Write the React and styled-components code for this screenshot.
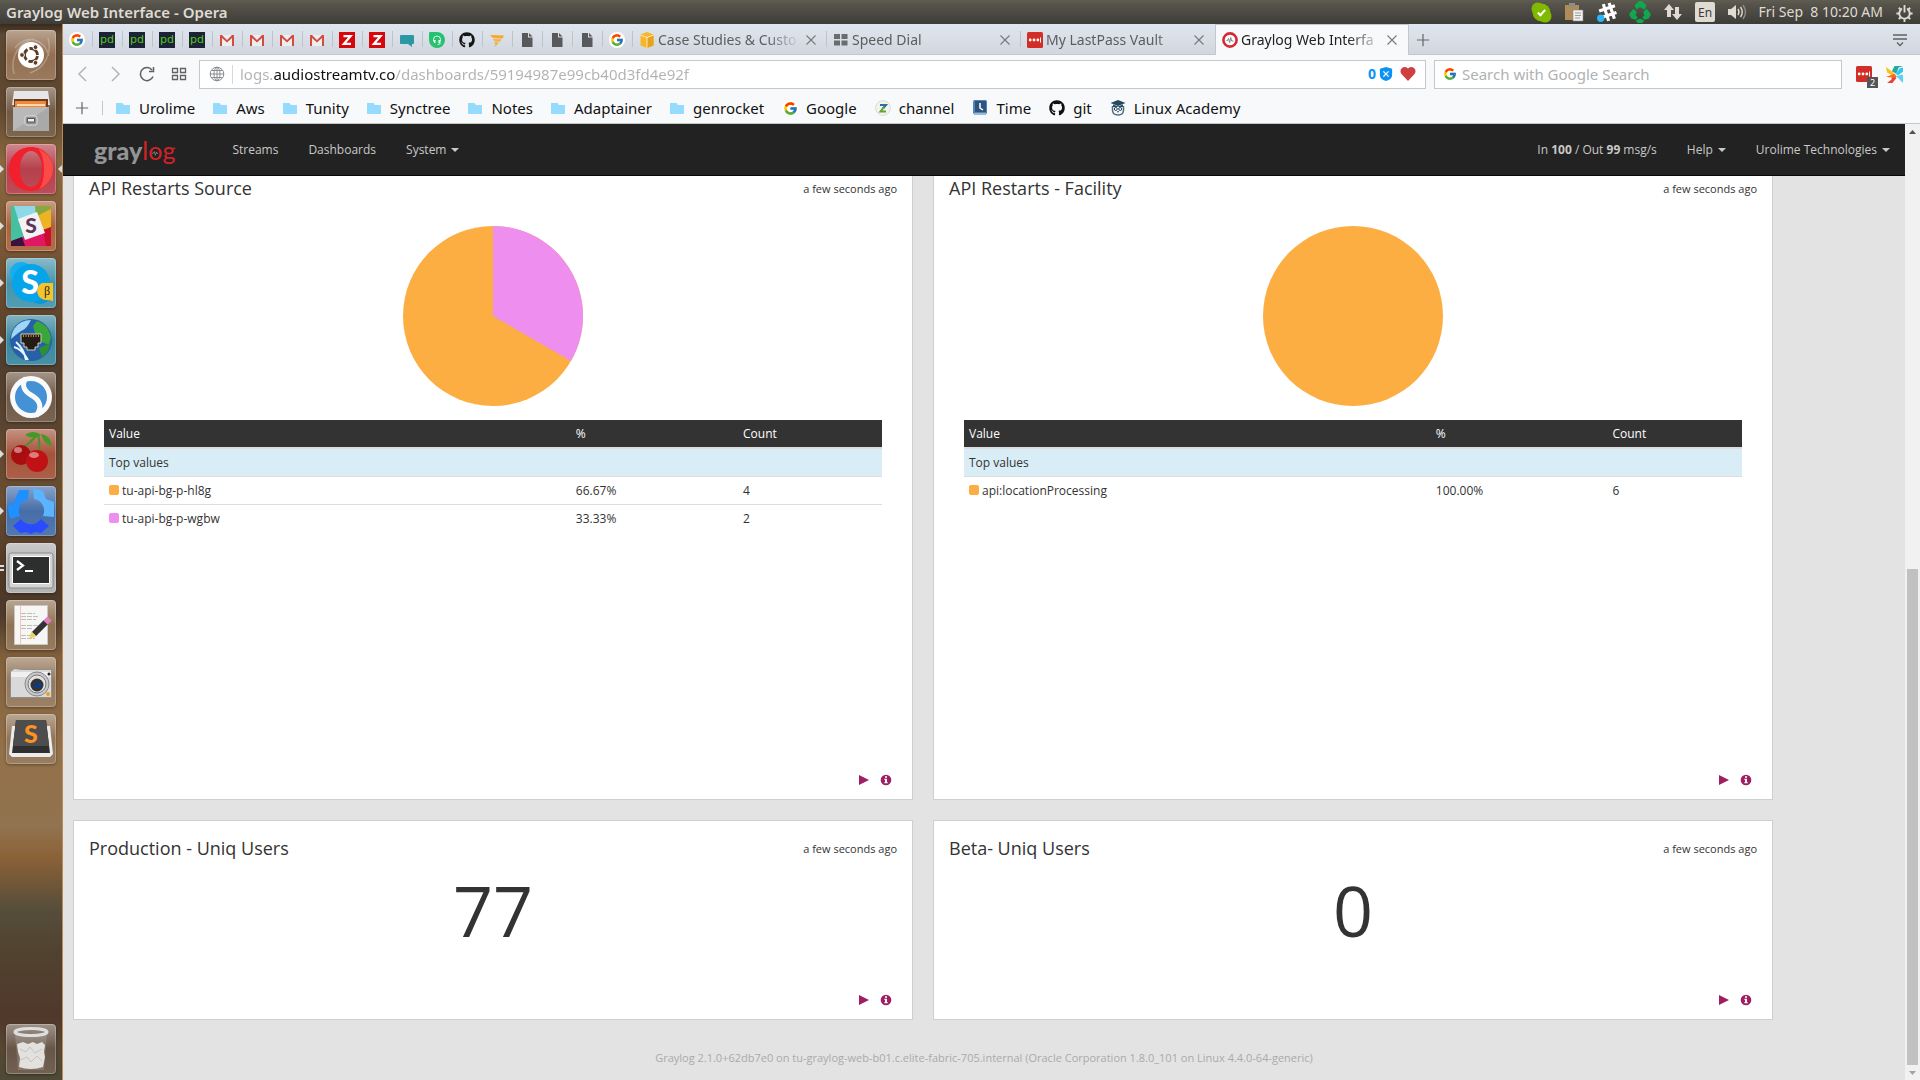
import React from "react";
import styled, { createGlobalStyle, css } from "styled-components";
import { FcGoogle } from "react-icons/fc";
import { FaGithub } from "react-icons/fa";

const uiFont = '"Noto Sans", "Open Sans", sans-serif';
const pageFont = '"Open Sans", "Noto Sans", sans-serif';

const Global = createGlobalStyle`
  *, *::before, *::after { box-sizing: border-box; }
  body { margin: 0; background: #e3e3e3; color: #333; font: 12px/17px ${pageFont}; }
  button { margin: 0; padding: 0; border: 0; background: none; font: inherit; color: inherit; cursor: pointer; }
  a { color: inherit; text-decoration: none; }
  svg { display: block; flex: none; }
`;

/* ---------- desktop frame ---------- */
const Desktop = styled.div`
  display: flex;
  flex-direction: column;
  height: 100vh;
  overflow: hidden;
`;
const SystemBar = styled.header`
  display: flex;
  align-items: center;
  justify-content: space-between;
  flex: none;
  height: 24px;
  padding: 0 6px;
  background: linear-gradient(#5f5c51, #56534b 20%, #3d3c37);
  color: #dfdbd2;
  font: 14px/20px ${uiFont};
`;
const WindowTitle = styled.strong`
  font-size: 15px;
  font-weight: 600;
`;
const Tray = styled.div`
  display: flex;
  align-items: center;
  gap: 12px;
`;
const Clock = styled.time`
  white-space: pre;
`;
const Workspace = styled.div`
  display: flex;
  flex: 1;
  min-height: 0;
`;
const Launcher = styled.nav`
  display: flex;
  flex-direction: column;
  gap: 7px;
  flex: none;
  width: 63px;
  padding: 6px 0 6px;
  border-right: 1px solid #b98a58;
  background: linear-gradient(
    #3a2a1d 0, #5d4833 1%, #60482f 8%, #8a6840 13%, #7d5a38 20%, #67482e 26%,
    #4f3d2e 32%, #6a4e32 45%, #4f3826 52%, #4d3b2c 56%, #81603c 60%, #93714a 69%,
    #91734f 76%, #8a6137 79%, #554d3a 84%, #51422f 88%, #50382b 94%, #564732 97%, #4d4a36);
`;
const Tile = styled.button`
  position: relative;
  flex: none;
  width: 50px;
  height: 50px;
  margin-left: 6px;
  border-radius: 4px;
  background: linear-gradient(rgba(255, 255, 255, 0.4), rgba(255, 255, 255, 0.05) 50%, rgba(255, 255, 255, 0.12)), ${(p) => p.$tint};
  box-shadow: inset 0 0 0 1px rgba(255, 255, 255, 0.25), 0 1px 3px rgba(0, 0, 0, 0.35);
  ${(p) => p.$last && css`margin-top: auto;`}
  ${(p) => p.$open && css`
    &::before {
      content: "";
      position: absolute;
      left: -6px;
      top: 21px;
      border: 4px solid transparent;
      border-left-color: #dcdcdc;
      border-right: 0;
    }
  `}
  ${(p) => p.$windows && css`
    &::before {
      content: "";
      position: absolute;
      left: -6px;
      top: 22px;
      width: 4px;
      height: 6px;
      border: solid #dcdcdc;
      border-width: 2px 0;
    }
  `}
  ${(p) => p.$active && css`
    &::after {
      content: "";
      position: absolute;
      right: -6px;
      top: 21px;
      border: 4px solid transparent;
      border-right-color: #dcdcdc;
      border-left: 0;
    }
  `}
`;

/* ---------- browser chrome ---------- */
const Browser = styled.div`
  display: flex;
  flex-direction: column;
  flex: 1;
  min-width: 0;
  background: #f8f9fb;
  font: 15px/20px ${uiFont};
`;
const TabBar = styled.div`
  display: flex;
  flex: none;
  height: 31px;
  background: linear-gradient(#e0e6ef, #d1d6de);
  box-shadow: inset 0 -1px 0 #c4c8c9;
  color: #5c5d60;
  font-size: 14px;
`;
const divider = css`
  &::after {
    content: "";
    position: absolute;
    right: 0;
    top: 7px;
    height: 16px;
    border-right: 1px solid #bfc3c9;
  }
`;
const PinnedTab = styled.button`
  position: relative;
  display: grid;
  place-items: center;
  width: 30px;
  padding-right: 2px;
  flex: none;
  ${divider}
`;
const TabItem = styled.div`
  position: relative;
  display: flex;
  align-items: center;
  gap: 3px;
  flex: 0 1 194px;
  min-width: 0;
  padding: 0 9px 0 6px;
  ${(p) => p.$active
    ? css`
        background: #f8f9fb;
        color: #222;
        border: solid #c4c8c9;
        border-width: 1px 1px 0;
      `
    : p.$divided && divider}
`;
const TabLabel = styled.button`
  flex: 1;
  min-width: 0;
  overflow: hidden;
  text-align: left;
  white-space: nowrap;
  mask-image: linear-gradient(90deg, #000 calc(100% - 34px), transparent);
`;
const IconButton = styled.button`
  display: grid;
  place-items: center;
  flex: none;
  width: ${(p) => p.$w || 32}px;
  color: #5f6163;
`;
const Push = styled.span`
  margin-left: auto;
  display: flex;
`;
const NavRow = styled.div`
  display: flex;
  align-items: center;
  flex: none;
  height: 38px;
  padding: 0 17px 0 4px;
`;
const Field = styled.label`
  display: flex;
  align-items: center;
  height: 29px;
  background: #fff;
  border: 1px solid #c4c8c9;
  ${(p) => (p.$search ? css`flex: 0 1 408px; margin: 0 14px 0 8px; padding-left: 8px; gap: 5px;` : css`flex: 1; margin-left: 4px; padding: 0 9px 0 9px; gap: 7px;`)}
`;
const FieldInput = styled.input`
  flex: 1;
  min-width: 0;
  border: 0;
  padding: 0;
  outline: 0;
  background: none;
  color: #b5b5b5;
  font: 15px/22px ${uiFont};
  &::placeholder { color: #b0b2b3; opacity: 1; }
`;
const UrlInput = styled(FieldInput)`
  background: linear-gradient(90deg, #b0b2b3 34px, #111 34px, #111 155px, #b0b2b3 155px);
  background-clip: text;
  -webkit-text-fill-color: transparent;
`;
const FieldRule = styled.span`
  height: 19px;
  border-left: 1px solid #d6d8da;
`;
const Blocked = styled.button`
  display: flex;
  align-items: center;
  gap: 3px;
  color: #0a93f5;
  font-size: 14px;
  font-weight: 700;
`;
const Extensions = styled.div`
  display: flex;
  align-items: center;
  gap: 14px;
`;
const ExtButton = styled.button`
  position: relative;
`;
const ExtBadge = styled.span`
  position: absolute;
  right: -6px;
  bottom: -6px;
  width: 11px;
  height: 11px;
  background: #555;
  color: #fff;
  font: 9px/11px ${uiFont};
  text-align: center;
`;
const Bookmarks = styled.nav`
  display: flex;
  align-items: center;
  gap: 18px;
  flex: none;
  height: 31px;
  padding: 0 12px;
  border-bottom: 1px solid #c4c8c9;
  color: #111;
`;
const AddBookmark = styled.button`
  padding-right: 13px;
  margin-right: -5px;
  border-right: 1px solid #c4c8c9;
  color: #5f6163;
`;
const Bookmark = styled.a`
  display: flex;
  align-items: center;
  gap: 8px;
  white-space: nowrap;
`;

/* ---------- page ---------- */
const Viewport = styled.div`
  display: flex;
  flex: 1;
  min-height: 0;
`;
const Page = styled.div`
  flex: 1;
  min-width: 0;
  background: #e3e3e3;
  font: 12px/17px ${pageFont};
`;
const Navbar = styled.nav`
  display: flex;
  align-items: center;
  height: 52px;
  padding-left: 31px;
  background: #222;
  border-bottom: 1px solid #080808;
  color: #c9c9c9;
`;
const Brand = styled.a`
  margin-right: 42px;
  color: #929497;
  font: 900 25px/32px Lato, sans-serif;
`;
const BrandAccent = styled.span`
  color: #d12227;
  font-weight: 400;
`;
const Ring = styled.span`
  position: relative;
  svg { position: absolute; left: 4px; top: 15px; }
`;
const NavLink = styled.a`
  display: flex;
  align-items: center;
  gap: 5px;
  padding: 0 15px;
  white-space: pre;
  ${(p) => p.$caret && css`
    &::after {
      content: "";
      border: 4px solid transparent;
      border-top-color: currentColor;
      border-bottom: 0;
    }
  `}
`;
const Dashboard = styled.main`
  display: grid;
  grid-template-columns: 1fr 1fr;
  gap: 20px;
  padding: 0 132px 29px 10px;
`;
const Card = styled.section`
  display: flex;
  flex-direction: column;
  min-height: ${(p) => (p.$tall ? 624 : 200)}px;
  padding: ${(p) => (p.$tall ? 2 : 17)}px 15px 13px;
  background: #fff;
  border: 1px solid #cfcfcf;
  ${(p) => p.$tall && css`border-top: 0;`}
`;
const CardHead = styled.header`
  display: flex;
  align-items: center;
  justify-content: space-between;
  height: 20px;
`;
const CardTitle = styled.h2`
  margin: 0;
  font: 400 18px/20px ${pageFont};
`;
const Age = styled.span`
  font-size: 11px;
`;
const CardFoot = styled.footer`
  display: flex;
  justify-content: flex-end;
  gap: 10px;
  margin-top: auto;
  padding-right: 5px;
  color: #9e1f63;
`;
const Pie = styled.svg`
  width: 180px;
  height: 180px;
  margin: 28px auto 14px;
`;
const Values = styled.table`
  margin: 0 15px;
  table-layout: fixed;
  border-spacing: 0;
  th, td { padding: 5px; text-align: left; font-weight: 400; }
  thead th { background: #333; color: #fff; border-bottom: 2px solid #ddd; }
  tbody td { border-top: 1px solid #ddd; }
  tbody th { background: #d9edf7; }
`;
const Column = styled.col`
  width: ${(p) => p.$w};
`;
const Swatch = styled.span`
  display: inline-block;
  width: 10px;
  height: 10px;
  margin-right: 3px;
  border-radius: 2px;
  background: ${(p) => p.$color};
`;
const BigNumber = styled.p`
  margin: 17px 0 0;
  font-size: 70px;
  line-height: 70px;
  text-align: center;
`;
const PageFoot = styled.footer`
  color: #aaa;
  font-size: 11px;
  text-align: center;
`;
const Scrollbar = styled.div`
  display: flex;
  flex-direction: column;
  width: 15px;
  background: #f1f1f1;
`;
const ScrollArrow = styled.button`
  display: grid;
  place-items: center;
  height: 15px;
  color: ${(p) => (p.$dim ? "#a3a3a3" : "#505050")};
`;
const ScrollGap = styled.span`
  flex: 430;
`;
const Thumb = styled.span`
  flex: 496;
  margin: 0 2px;
  background: #c1c1c1;
`;

/* ---------- small icons ---------- */
const Svg = ({ w = 16, h = w, v = "0 0 16 16", children }) => (
  <svg width={w} height={h} viewBox={v} fill="none" aria-hidden="true">{children}</svg>
);
const GoogleIcon = () => (
  <Svg><circle cx="8" cy="8" r="8" fill="#fff" /><FcGoogle x="1" y="1" width="14" height="14" /></Svg>
);
const PdIcon = () => (
  <Svg><path fill="#1d2336" d="M0 0h16v16H0z" /><text x="8" y="11" textAnchor="middle" fontFamily="DejaVu Sans, sans-serif" fontSize="11" fill="#4fc714">pd</text></Svg>
);
const MailIcon = () => (
  <Svg><path fill="#eceff1" d="M1 3h14v11H1z" /><path fill="#d54b3d" d="M1 3h2l5 5 5-5h2v11h-2V6l-5 4.600L3 6v8H1z" /></Svg>
);
const ZIcon = () => (
  <Svg><path fill="#d8070b" d="M0 0h16v16H0z" /><path fill="none" stroke="#fff" strokeWidth="2.300" d="M4.500 4.200h7L5 11.800h7" /></Svg>
);
const ChatIcon = () => <Svg><path fill="#2b98a4" d="M2 3h12a1 1 0 0 1 1 1v7a1 1 0 0 1-1 1h-1v3l-4-3H2a1 1 0 0 1-1-1V4a1 1 0 0 1 1-1z" /></Svg>;
const HeadsetIcon = () => (
  <Svg><path fill="#27c26f" d="M1 0h7a8 8 0 1 1-8 8V1a1 1 0 0 1 1-1z" /><path stroke="#fff" strokeOpacity=".85" d="M4.500 9.500V7.500a3.500 3.500 0 0 1 7 0v2" /><path fill="#fff" d="M5 8h1.500v3H5zM9.500 8H11v3H9.500z" /><path stroke="#fff" strokeWidth=".8" d="M11.500 10.500q0 2-3 2" /></Svg>
);
const FunnelIcon = () => (
  <Svg><path fill="#f9a825" d="M1 3l14 0.500-1.500 3L4 6z" /><path fill="#fbb33b" d="M3.500 7l9 .300-1.500 2.500L6 9.500z" /><path fill="#f9a825" d="M5 10.300l4.500.200-1.500 2L5.700 15l.8-3z" /></Svg>
);
const FileIcon = () => <Svg><path fill="#58595b" d="M3 1h6v4.500h4.500V15H3z" /><path fill="#58595b" d="M10 1l3.500 3.500H10z" /></Svg>;
const BoxIcon = () => (
  <Svg><path fill="#f7b52c" d="M8 0l6.500 2.500v11L8 16l-6.500-2.500v-11z" /><path fill="#e8a31d" d="M8 6v10l6.500-2.500V3.500z" /><path stroke="#fff6dd" strokeWidth=".8" d="M1.500 3L8 5.500 14.500 3M8 5.500V16" /></Svg>
);
const GridIcon = () => <Svg><path fill="#6b6c6e" d="M1 2h6v5H1zM8.500 2h6v5h-6zM1 8.500h6v5H1zM8.500 8.500h6v5h-6z" /></Svg>;
const LastPassIcon = () => (
  <Svg><rect width="16" height="16" rx="1.500" fill="#d32d27" /><g fill="#fff"><circle cx="3.200" cy="8" r="1.400" /><circle cx="7" cy="8" r="1.400" /><circle cx="10.800" cy="8" r="1.400" /><path d="M13 5.500h1v5h-1z" /></g></Svg>
);
const GraylogIcon = () => (
  <Svg><circle cx="8" cy="8" r="6.600" fill="#fff" stroke="#d12c36" strokeWidth="2.600" /><path stroke="#777" strokeWidth=".9" d="M4.500 8.500h1l1-2 1.200 4 1-5 1 3.500h1.800" /></Svg>
);
const CloseIcon = () => <Svg w={12}><path stroke="#77797b" strokeWidth="1.500" d="M2 2l12 12M14 2L2 14" /></Svg>;
const PlusIcon = () => <Svg w={14}><path stroke="#66686a" strokeWidth="1.400" d="M8 1v14M1 8h14" /></Svg>;
const Folder = () => <Svg w={15} h={14} v="0 0 15 14"><path fill="#94dbfe" d="M0 2h6.500l1.500 2h6v9H0z" /></Svg>;
const ChannelIcon = () => (
  <Svg><circle cx="8" cy="8" r="7.400" fill="#f3f3ee" stroke="#dcdcd6" /><path stroke="#2f6fa5" strokeWidth="2" d="M5 5h6L8 8.500" /><path stroke="#5aa636" strokeWidth="2" d="M9 7l-3.500 4.500H11" /></Svg>
);
const TimeIcon = () => (
  <Svg><rect x="1" y="0" width="14" height="14" rx="1.500" fill="#5384b8" /><path fill="#2c547f" d="M3 1h11v11H3z" /><path fill="#9db9d6" d="M2 13h12v2H2z" /><path stroke="#fff" strokeWidth="1.500" d="M8 3v5l3 2" /></Svg>
);
const OwlIcon = () => (
  <Svg><path fill="#27475d" d="M8 0l7.500 3L8 6 .5 3z" /><path fill="#27475d" d="M3 4.500L8 6.500l5-2V7H3z" /><path stroke="#4c6c80" strokeWidth="1.500" d="M2.500 6v4.500Q3 15 8 15t5.500-4.500V6" /><circle cx="5.800" cy="9" r="1.500" stroke="#27475d" /><circle cx="10.200" cy="9" r="1.500" stroke="#27475d" /><path fill="#27475d" d="M7 11h2l-1 2z" /></Svg>
);
const BirdIcon = () => (
  <Svg w={17}><path fill="#28a99e" d="M5.500 5L8 0h8l-4 1.500L9.500 7z" /><path fill="#37c6ee" d="M9 7l4-5 3-.5v4L11 9z" /><path fill="#5ed0f0" d="M9.500 9.500L16 8v8z" /><path fill="#f9c21b" d="M0 1l7.500 5.500L6 9 1 6z" /><path fill="#ee3e36" d="M6 9l4 2-4 5H1l4-3z" /><path fill="#f4701f" d="M0 10l5-1.500L8 7l2 3-4 1z" /></Svg>
);

/* ---------- launcher drawings, 50 x 50 ---------- */
const Art = ({ children }) => <svg width="50" height="50" viewBox="0 0 50 50" fill="none" aria-hidden="true">{children}</svg>;
const apps = [
  { name: "Search", tint: "#8d6748", art: (
    <Art><path stroke="#fff" strokeOpacity=".25" strokeWidth="1.500" d="M8 44C4 28 12 12 28 9M42 8c4 14-2 30-18 35M9 18C20 4 38 8 43 26" /><circle cx="25" cy="25" r="13" fill="#fff" /><circle cx="25" cy="25" r="6.500" stroke="#5b3d28" strokeWidth="2.800" strokeDasharray="11.600 2" strokeDashoffset="-1" /><g fill="#5b3d28" stroke="#fff"><circle cx="16" cy="25" r="2.400" /><circle cx="29.500" cy="17.200" r="2.400" /><circle cx="29.500" cy="32.800" r="2.400" /></g></Art>) },
  { name: "Files", tint: "#6b5138", art: (
    <Art><path fill="#e6e6e6" d="M8 4h34l2 14H6z" /><path fill="#6b3a20" d="M8 12h34v8H8z" /><path fill="#f0873a" d="M9 14h31v6H9z" /><path fill="#ffd9a8" d="M11 17h28v2H11z" /><path fill="#a9a9a9" d="M7 20h36v24H7z" /><path fill="#c9c9c9" d="M7 20h36L7 44z" fillOpacity=".5" /><rect x="19" y="29" width="12" height="9" rx="2" fill="#8f8f8f" stroke="#e0e0e0" /><path fill="#f2f2f2" stroke="#555" d="M21.500 31.500h7v3.500h-7z" /></Art>) },
  { name: "Opera", tint: "#b23642", open: true, active: true, art: (
    <Art><path fill="#f0202c" fillRule="evenodd" d="M25 3c12 0 22 9 22 22s-10 22-22 22S3 38 3 25 13 3 25 3zm0 4c-6 0-11 7-11 18s5 18 11 18 11-7 11-18S31 7 25 7z" /><path fill="#ff6a5e" fillOpacity=".6" d="M32 5c9 3 15 11 15 20s-6 17-14 20c4-5 5-12 5-20s-2-16-6-20z" /></Art>) },
  { name: "Slack", tint: "#a75a30", open: true, art: (
    <Art><path fill="#44c1a0" d="M5 5h12l10 40H5z" /><path fill="#8fd8e8" d="M8 5h24l-2 10-17 6z" /><path fill="#88a840" d="M29 5h16v6l-15 5z" /><path fill="#ecb424" d="M31 15l14-7v18l-9 4z" /><path fill="#e01765" d="M14 37l25-9 6 17H17z" /><path fill="#c8102e" d="M37 29l8-3v19h-5z" /><path fill="#3c1140" d="M5 40l11-4 3 9H5z" /><path fill="#f4f1f4" d="M12 18l19-7 8 21-20 7z" /><text x="25" y="32" textAnchor="middle" fontFamily="Lato, sans-serif" fontWeight="900" fontSize="21" fill="#5a3658">S</text></Art>) },
  { name: "Skype", tint: "#3c8fa8", open: true, art: (
    <Art><circle cx="15" cy="15" r="11" fill="#16aeee" /><circle cx="34" cy="35" r="11" fill="#0a98da" /><circle cx="25" cy="25" r="19" fill="#06a5ea" /><text x="24" y="36" textAnchor="middle" fontFamily="Lato, sans-serif" fontWeight="900" fontSize="32" fill="#fff">S</text><path fill="#f7c32a" d="M36 25h11v18h-1l-2-1h-4a9 9 0 0 1-4-17z" /><text x="41" y="37" textAnchor="middle" fontFamily="Liberation Serif, serif" fontSize="12" fill="#222">β</text></Art>) },
  { name: "Network", tint: "#2f8199", open: true, art: (
    <Art><circle cx="25" cy="25" r="21" fill="#2560a8" /><path fill="#9fd5f5" d="M8 14Q14 5 25 5q-4 8-8 10T5 24q0-5 3-10z" /><path fill="#3aa53a" d="M31 6q11 3 14 16l-2 8-7-3-7-9-2-7z" /><path fill="#2e8f35" d="M33 33l11-5q0 8-8 14z" /><path stroke="#e8f6ff" strokeWidth="2" d="M8 32q8 2 14 13M10 27q8 7 10 18" /><path fill="#241b14" stroke="#d9cfb5" d="M15 19h20v9h-3v4h-3v3h-8v-3h-3v-4h-3z" /><path stroke="#e5b64a" strokeWidth="1.500" strokeDasharray="1 1.500" d="M17 21h16" /></Art>) },
  { name: "Simplenote", tint: "#67503c", art: (
    <Art><circle cx="25" cy="25" r="21" fill="#fafafa" /><circle cx="25" cy="25" r="16" fill="#4491d6" /><path stroke="#fafafa" strokeWidth="5" d="M20 6c-5 7-2 13 5 17 9 5 12 12 5 21" /></Art>) },
  { name: "CherryTree", tint: "#a04a30", open: true, art: (
    <Art><path stroke="#4f8f28" strokeWidth="2" d="M17 19Q26 12 31 6M33 22Q34 12 32 6" /><path fill="#3f9b26" d="M19 6q8-6 16 0-8 5-16 0zM35 5q9 1 11 12-8-2-11-12z" /><circle cx="15" cy="26" r="10" fill="#a80d10" /><circle cx="31" cy="32" r="11" fill="#c01214" /><ellipse cx="12" cy="21" rx="4" ry="3" fill="#fff" fillOpacity=".45" /><ellipse cx="28" cy="26" rx="5" ry="3" fill="#fff" fillOpacity=".45" /></Art>) },
  { name: "Shutter", tint: "#3c66a4", open: true, art: (
    <Art><path fill="#1e90ff" d="M13 4l10 0-1 9a12 12 0 0 0-8 17l-9 3q-3-5-3-14l5-1z" /><path fill="#5ab4ff" d="M27 2l10 3 3 8 8 3v15l-11-1a12 12 0 0 0-9-17z" /><path fill="#2a4cff" d="M15 33a12 12 0 0 0 20 0l8 7-8 7-6-1-4 2-5-2-6 1-7-7z" /></Art>) },
  { name: "Terminal", tint: "#a9a9a9", windows: true, art: (
    <Art><rect x="3" y="10" width="44" height="35" rx="2" fill="#d4d4d4" stroke="#8a8a8a" /><path fill="#2d2f2f" stroke="#fff" d="M6.500 13.500h37v27h-37z" /><path stroke="#fff" strokeWidth="2.200" d="M11 18l6 4.500-6 4.500M19 28h8" /></Art>) },
  { name: "Text Editor", tint: "#8a6a4a", art: (
    <Art><path fill="#f6f6f4" stroke="#c9c9c9" d="M8.500 5.500h33v39h-33z" /><path stroke="#f1a3a3" strokeOpacity=".6" d="M14.500 6v38" /><path stroke="#bdbdbd" strokeDasharray="5 1" d="M15 13.500h14M15 16.500h17M15 19.500h15M15 25.500h17M15 28.500h12M15 35.500h15M15 38.500h14" /><path stroke="#333" strokeWidth="6" d="M28 34l12-12" /><path fill="#f0d264" d="M23 39l2.500-7.500 5 5z" /><path stroke="#e27fc4" strokeWidth="6" d="M39.500 22.500l4-4" /></Art>) },
  { name: "Camera", tint: "#8f7050", art: (
    <Art><path fill="#d9d9d9" stroke="#8e8e8e" d="M4.500 14.500l4-3 8 1h29v28h-41z" /><path fill="#f0f0f0" d="M5 15h40v5H5z" /><circle cx="31" cy="27" r="12" fill="#c9c9c9" stroke="#888" /><circle cx="31" cy="27" r="9" fill="#e2e2e2" stroke="#777" /><circle cx="31" cy="28" r="6.500" fill="#333" /><path fill="#0e3a80" d="M28 26h7v5h-7z" /><circle cx="42" cy="37" r="2" fill="#f29b1d" /><circle cx="43" cy="17" r="1.500" fill="#222" /></Art>) },
  { name: "Sublime Text", tint: "#8c6c4c", art: (
    <Art><path fill="#ececec" d="M6 12h38l3 28-3 3H6l-3-3z" /><path fill="#2f2f2f" d="M10 6h30l4 33H6z" /><path fill="#4d4d4d" d="M10 6h30l3 26H7z" /><text x="25" y="29" textAnchor="middle" fontFamily="Lato, sans-serif" fontWeight="900" fontSize="25" fill="#fb9320">S</text></Art>) },
  { name: "Trash", tint: "#5f4c3c", art: (
    <Art><path fill="#fff" fillOpacity=".15" d="M9 10h32l-3 36H12z" /><path fill="#e2e1dd" d="M11 20l6-2 5 2 5-2 4 2 5-2 3 3-1 7 1 5-2 10q-12 4-24 0l1-9-2-6z" /><path stroke="#c4c4c0" d="M14 25l6 3 4-5 5 6 7-4M14 36l7-3 4 5 6-6 5 5" /><ellipse cx="25" cy="8" rx="16" ry="3.500" stroke="#dedede" strokeWidth="3" /></Art>) },
];

const pinned = [
  GoogleIcon, PdIcon, PdIcon, PdIcon, PdIcon, MailIcon, MailIcon, MailIcon, MailIcon, ZIcon, ZIcon,
  ChatIcon, HeadsetIcon, FaGithub, FunnelIcon, FileIcon, FileIcon, FileIcon, GoogleIcon,
];
const tabs = [
  { title: "Case Studies & Custo", Icon: BoxIcon, divided: true },
  { title: "Speed Dial", Icon: GridIcon, divided: true },
  { title: "My LastPass Vault", Icon: LastPassIcon },
  { title: "Graylog Web Interfa", Icon: GraylogIcon, active: true },
];
const bookmarks = [
  ["Urolime", Folder], ["Aws", Folder], ["Tunity", Folder], ["Synctree", Folder], ["Notes", Folder],
  ["Adaptainer", Folder], ["genrocket", Folder], ["Google", GoogleIcon], ["channel", ChannelIcon],
  ["Time", TimeIcon], ["git", FaGithub], ["Linux Academy", OwlIcon],
];

const Actions = () => (
  <CardFoot>
    <button aria-label="Replay search"><Svg w={12} v="0 0 12 12"><path fill="currentColor" d="M1 1l10 5-10 5z" /></Svg></button>
    <button aria-label="Widget information"><Svg w={12} v="0 0 12 12"><circle cx="6" cy="6" r="5.300" fill="currentColor" /><path fill="#fff" d="M5 2.200h2v1.500H5zM4.300 4.700H7v3.600h.8v1H4.300v-1H5V5.700h-.7z" /></Svg></button>
  </CardFoot>
);

const Head = ({ title }) => (
  <CardHead><CardTitle>{title}</CardTitle><Age>a few seconds ago</Age></CardHead>
);

const ValuesCard = ({ title, rows, split, slice }) => (
  <Card $tall>
    <Head title={title} />
    <Pie viewBox="0 0 180 180" role="img" aria-label={`${title} chart`}>
      <circle cx="90" cy="90" r="90" fill="#fdae42" />
      {slice && <path fill="#ee8eee" d="M90 90V0a90 90 0 0 1 77.940 135z" />}
    </Pie>
    <Values>
      <colgroup><Column $w="60%" /><Column $w={split} /><Column /></colgroup>
      <thead><tr><th scope="col">Value</th><th scope="col">%</th><th scope="col">Count</th></tr></thead>
      <tbody>
        <tr><th colSpan={3} scope="rowgroup">Top values</th></tr>
        {rows.map(([name, pct, count, color]) => (
          <tr key={name}><td><Swatch $color={color} />{name}</td><td>{pct}</td><td>{count}</td></tr>
        ))}
      </tbody>
    </Values>
    <Actions />
  </Card>
);

const CountCard = ({ title, value }) => (
  <Card>
    <Head title={title} />
    <BigNumber>{value}</BigNumber>
    <Actions />
  </Card>
);

export default function App() {
  return (
    <Desktop>
      <Global />
      <SystemBar>
        <WindowTitle>Graylog Web Interface - Opera</WindowTitle>
        <Tray>
          <Svg w={21} v="0 0 20 20"><circle cx="6.500" cy="6.500" r="6" fill="#7fba00" /><circle cx="13.500" cy="13.500" r="6" fill="#7fba00" /><circle cx="10" cy="10" r="8.500" fill="#7fba00" /><path stroke="#fff" strokeWidth="2" d="M6.500 10l2.500 2.500 4.500-5" /></Svg>
          <Svg w={20} v="0 0 20 20"><path fill="#b08b5a" d="M1 3h14v15H1z" /><path fill="#8c8c88" d="M5 1h6v4H5z" /><path fill="#f1f1ef" stroke="#888" strokeWidth=".6" d="M9 8h10v11H9z" /><path stroke="#999" d="M11 11h6M11 13.500h6M11 16h5" /></Svg>
          <Svg w={21} v="0 0 20 20"><path stroke="#fff" strokeWidth="3" d="M7 2l5 16M12.500 1l5 15M3 8.500l15-5M4.500 15l15-5" /><circle cx="4.500" cy="15.500" r="3.500" fill="#29b6f6" /></Svg>
          <Svg w={22} v="0 0 20 20"><path fill="#0fa84e" d="M5 4l4-4h3l4 4-2 4-3-2-2 0-2 2zM4 7l3 3-1 3 2 2-2 2-4-1-2-4zM16 7l-3 3 1 3-2 2 2 2 4-1 2-4z" /><path fill="#0fa84e" d="M6 18l4-2 4 2-2 2H8z" /></Svg>
          <Svg w={20} v="0 0 20 20"><path fill="#dfdbd2" d="M6 2l5 6H8v7H4V8H1zM14 18l5-6h-3V5h-4v7H9z" /></Svg>
          <Svg w={20} v="0 0 20 20"><rect width="20" height="20" rx="2" fill="#dfdbd2" /><text x="10" y="14.500" textAnchor="middle" fontFamily="Noto Sans, sans-serif" fontSize="12" fill="#3c3b37">En</text></Svg>
          <Svg w={20} v="0 0 20 20"><path fill="#dfdbd2" d="M1 7h3l5-4v14l-5-4H1z" /><path stroke="#dfdbd2" strokeWidth="1.400" d="M11 7q2 3 0 6M13.500 5q3.500 5 0 10" /><path stroke="#8d8a82" strokeWidth="1.400" d="M16 3q5 7 0 14" /></Svg>
          <Clock>Fri Sep  8 10:20 AM</Clock>
          <Svg w={19} v="0 0 20 20"><circle cx="10" cy="11" r="5.500" stroke="#dfdbd2" strokeWidth="2" /><path stroke="#4a4943" strokeWidth="5" d="M10 2v7" /><path stroke="#dfdbd2" strokeWidth="2" d="M10 2v8M1.500 11h3M15.500 11h3M4 17l2-2M16 17l-2-2M4 5l2 2M16 5l-2 2M10 17v3" /></Svg>
        </Tray>
      </SystemBar>
      <Workspace>
        <Launcher aria-label="Launcher">
          {apps.map((a, i) => (
            <Tile key={a.name} aria-label={a.name} $tint={a.tint} $open={a.open} $windows={a.windows} $active={a.active} $last={i === apps.length - 1}>{a.art}</Tile>
          ))}
        </Launcher>
        <Browser>
          <TabBar>
            {pinned.map((Icon, i) => (
              <PinnedTab key={i} aria-label={`Pinned tab ${i + 1}`}><Icon size={16} color="#181717" /></PinnedTab>
            ))}
            {tabs.map(({ title, Icon, active, divided }) => (
              <TabItem key={title} $active={active} $divided={divided}>
                <Icon />
                <TabLabel>{title}</TabLabel>
                <IconButton $w={14} aria-label={`Close ${title}`}><CloseIcon /></IconButton>
              </TabItem>
            ))}
            <IconButton $w={28} aria-label="New tab"><PlusIcon /></IconButton>
            <Push>
              <IconButton $w={40} aria-label="Tab menu"><Svg><path stroke="currentColor" strokeWidth="1.300" d="M1 3h14M1 7h14M5 10.500l3 3 3-3" /></Svg></IconButton>
            </Push>
          </TabBar>
          <NavRow>
            <IconButton aria-label="Back"><Svg><path stroke="#b3b5b7" strokeWidth="1.500" d="M11 1L4 8l7 7" /></Svg></IconButton>
            <IconButton aria-label="Forward"><Svg><path stroke="#b3b5b7" strokeWidth="1.500" d="M5 1l7 7-7 7" /></Svg></IconButton>
            <IconButton aria-label="Reload"><Svg><path stroke="#5f6163" strokeWidth="1.500" d="M14 10.500A6.500 6.500 0 1 1 13 4M14.500 1v4.500H10" /></Svg></IconButton>
            <IconButton aria-label="Speed dial"><Svg><path stroke="#5f6163" strokeWidth="1.300" d="M1.500 2.500h5v4h-5zM9.500 2.500h5v4h-5zM1.500 9.500h5v4h-5zM9.500 9.500h5v4h-5z" /></Svg></IconButton>
            <Field>
              <Svg><g stroke="#8b8d8f"><circle cx="8" cy="8" r="6.800" /><ellipse cx="8" cy="8" rx="3" ry="6.800" /><path d="M8 1v14M1 8h14M2.500 4.500h11M2.500 11.500h11" /></g></Svg>
              <FieldRule />
              <UrlInput aria-label="Address" defaultValue="logs.audiostreamtv.co/dashboards/59194987e99cb40d3fd4e92f" />
              <Blocked aria-label="0 ads blocked">0<Svg w={14}><path fill="#0a93f5" d="M8 0l7 2v7q0 5-7 7-7-2-7-7V2z" /><path stroke="#fff" strokeWidth="1.600" d="M5 5l6 6M11 5l-6 6" /></Svg></Blocked>
              <button aria-label="Bookmark this page"><Svg><path fill="#cf4042" d="M8 15L1.500 8A4 4 0 0 1 8 2.500 4 4 0 0 1 14.500 8z" /></Svg></button>
            </Field>
            <Field $search>
              <FcGoogle size={14} />
              <FieldInput aria-label="Search" placeholder="Search with Google Search" />
            </Field>
            <Extensions>
              <ExtButton aria-label="LastPass"><LastPassIcon /><ExtBadge>2</ExtBadge></ExtButton>
              <ExtButton aria-label="Extension"><BirdIcon /></ExtButton>
            </Extensions>
          </NavRow>
          <Bookmarks aria-label="Bookmarks">
            <AddBookmark aria-label="Add bookmark"><PlusIcon /></AddBookmark>
            {bookmarks.map(([label, Icon]) => (
              <Bookmark key={label} href="#"><Icon size={16} />{label}</Bookmark>
            ))}
          </Bookmarks>
          <Viewport>
            <Page>
              <Navbar>
                <Brand href="#">gray<BrandAccent>l<Ring>o<Svg w={6} v="0 0 8 8"><path stroke="#999" strokeWidth=".9" d="M0 4.500h1.500L3 2l1.500 5L6 2.500l.8 2H8" /></Svg></Ring>g</BrandAccent></Brand>
                <NavLink href="#">Streams</NavLink>
                <NavLink href="#">Dashboards</NavLink>
                <NavLink href="#" $caret>System</NavLink>
                <Push>
                  <NavLink href="#"><span>In <b>100</b> / Out <b>99</b> msg/s</span></NavLink>
                  <NavLink href="#" $caret>Help</NavLink>
                  <NavLink href="#" $caret>Urolime Technologies</NavLink>
                </Push>
              </Navbar>
              <Dashboard>
                <ValuesCard title="API Restarts Source" split="21.5%" slice rows={[
                  ["tu-api-bg-p-hl8g", "66.67%", "4", "#fdae42"],
                  ["tu-api-bg-p-wgbw", "33.33%", "2", "#ee8eee"],
                ]} />
                <ValuesCard title="API Restarts - Facility" split="22.7%" rows={[
                  ["api:locationProcessing", "100.00%", "6", "#fdae42"],
                ]} />
                <CountCard title="Production - Uniq Users" value="77" />
                <CountCard title="Beta- Uniq Users" value="0" />
              </Dashboard>
              <PageFoot>Graylog 2.1.0+62db7e0 on tu-graylog-web-b01.c.elite-fabric-705.internal (Oracle Corporation 1.8.0_101 on Linux 4.4.0-64-generic)</PageFoot>
            </Page>
            <Scrollbar aria-hidden="true">
              <ScrollArrow tabIndex={-1}><Svg w={7} h={4} v="0 0 7 4"><path fill="currentColor" d="M0 4l3.500-4L7 4z" /></Svg></ScrollArrow>
              <ScrollGap />
              <Thumb />
              <ScrollArrow $dim tabIndex={-1}><Svg w={7} h={4} v="0 0 7 4"><path fill="currentColor" d="M0 0l3.500 4L7 0z" /></Svg></ScrollArrow>
            </Scrollbar>
          </Viewport>
        </Browser>
      </Workspace>
    </Desktop>
  );
}
